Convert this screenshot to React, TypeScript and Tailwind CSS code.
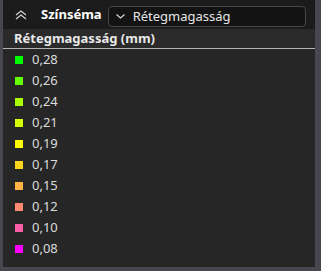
import React from "react";

const rows = [
  { v: "0,28", c: "bg-[#00ff00]" },
  { v: "0,26", c: "bg-[#66ff00]" },
  { v: "0,24", c: "bg-[#aaff00]" },
  { v: "0,21", c: "bg-[#d4ff00]" },
  { v: "0,19", c: "bg-[#ffff00]" },
  { v: "0,17", c: "bg-[#ffd51c]" },
  { v: "0,15", c: "bg-[#ffb347]" },
  { v: "0,12", c: "bg-[#ff8a70]" },
  { v: "0,10", c: "bg-[#ff5ca8]" },
  { v: "0,08", c: "bg-[#ff00ff]" },
];

const App = () => {
  return (
    <div className="w-[321px] h-[271px] bg-[#47474f] pl-[3px] pr-[6px] pb-[4px] font-['Noto_Sans',sans-serif]">
      <div className="h-full flex flex-col bg-[#262626]">
        {/* header */}
        <div className="h-[29px] flex items-center bg-[#1b1b1b] pl-[12px] pr-[9px]">
          <svg width="12" height="10" viewBox="0 0 12 10" className="text-[#d0d0d0]">
            <path d="M1 5 L6 1 L11 5 M1 9 L6 5 L11 9" fill="none" stroke="currentColor" strokeWidth="1.3" />
          </svg>
          <span className="ml-[14px] text-[13px] font-bold text-white leading-none">Színséma</span>
          <div className="ml-[6px] flex-1 h-[21px] mt-[3px] flex items-center rounded-[4px] border border-[#464646] bg-[#131313]">
            <svg width="9" height="5" viewBox="0 0 9 5" className="ml-[7px] text-[#d8d8d8]">
              <path d="M0.5 0.5 L4.5 4 L8.5 0.5" fill="none" stroke="currentColor" strokeWidth="1.2" />
            </svg>
            <span className="ml-[8px] text-[13px] text-[#e6e6e6] leading-none">Rétegmagasság</span>
          </div>
        </div>
        {/* title */}
        <div className="h-[20px] flex items-center pl-[11px] bg-[#2a2a2a] border-b border-[#b4b4b4]">
          <span className="text-[13px] font-bold text-[#e8e8e8] leading-none">Rétegmagasság (mm)</span>
        </div>
        {/* list */}
        <div className="flex flex-col">
          {rows.map((r) => (
            <div key={r.v} className="h-[21px] flex items-center pl-[12px]">
              <div className={`w-[8px] h-[8px] ${r.c}`} />
              <span className="ml-[9px] text-[13px] text-[#dcdcdc] leading-none">{r.v}</span>
            </div>
          ))}
        </div>
      </div>
    </div>
  );
};

export default App;
